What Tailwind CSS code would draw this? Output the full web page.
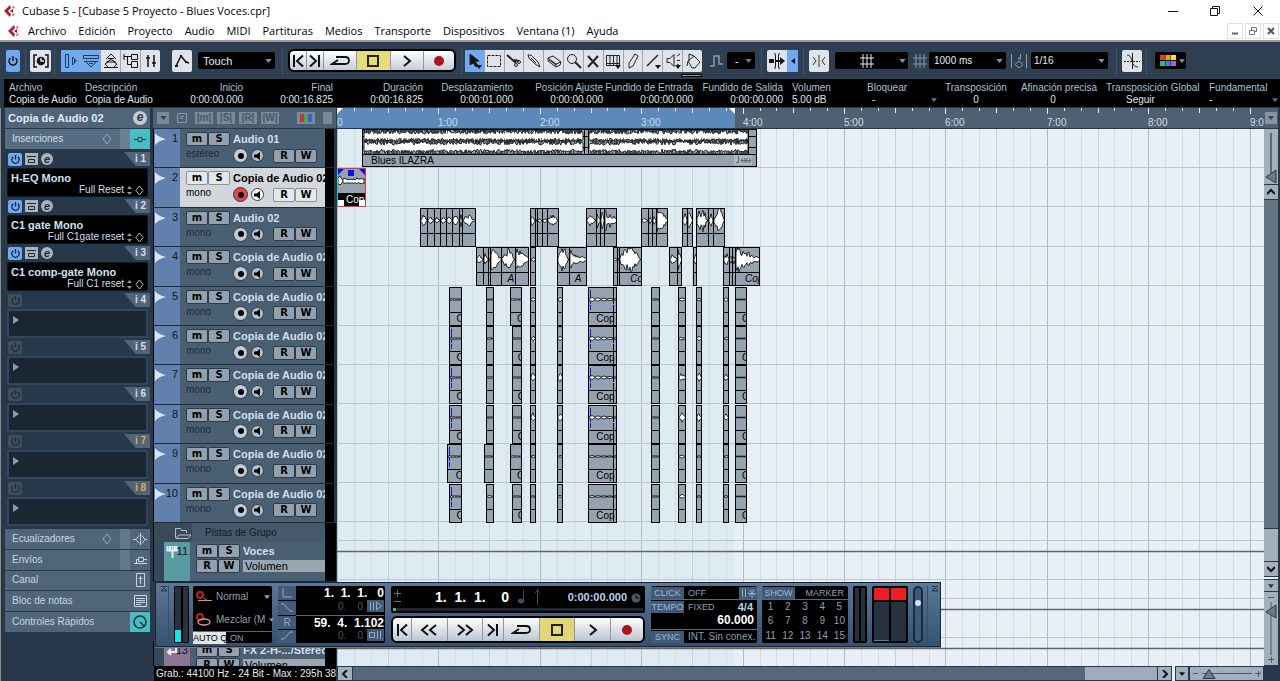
<!DOCTYPE html>
<html lang="es">
<head>
  <meta charset="UTF-8" />
  <meta name="viewport" content="width=device-width, initial-scale=1.0" />
  <title>Cubase 5 - [Cubase 5 Proyecto - Blues Voces.cpr]</title>
  <script src="https://cdn.jsdelivr.net/npm/@tailwindcss/browser@4"></script>
</head>
<body class="h-screen flex flex-col overflow-hidden bg-[#26384a] font-['Liberation_Sans',sans-serif] text-[10px] leading-3 text-[#d3dfec] whitespace-nowrap">

  <!-- shared icons -->
  <svg class="hidden">
    <symbol id="logo" viewBox="0 0 12 12"><path d="M6 0 0 6l6 6 1-3-3-3 3-3z" fill="#b01c36"/><path d="M8 1l3 1-2 2zM8 11l3-1-2-2z" fill="#c9566a"/><path d="M6 6l3-2v4z" fill="#8e1029"/></symbol>
    <symbol id="power" viewBox="0 0 12 12"><path d="M6 1v5M3.500 3a4 4 0 1 0 5 0" fill="none" stroke="currentColor" stroke-width="1.400"/></symbol>
    <symbol id="start" viewBox="0 0 12 14"><path d="M2 1v12M11 1.500 5 7l6 5.500" fill="none" stroke="#111" stroke-width="2"/></symbol>
    <symbol id="end" viewBox="0 0 12 14"><path d="M10 1v12M1 1.500 7 7l-6 5.500" fill="none" stroke="#111" stroke-width="2"/></symbol>
    <symbol id="cycle" viewBox="0 0 20 12"><path d="M6 2h9q4 0 4 3.500T15 9H2l6-4" fill="none" stroke="#111" stroke-width="1.800"/></symbol>
    <symbol id="stop" viewBox="0 0 14 14"><path d="M2 2h10v10H2z" fill="none" stroke="#222" stroke-width="2"/></symbol>
    <symbol id="play" viewBox="0 0 10 14"><path d="M2 2l6 5-6 5" fill="none" stroke="#111" stroke-width="2"/></symbol>
    <symbol id="rec" viewBox="0 0 12 12"><circle cx="6" cy="6" r="5" fill="#ab151d"/></symbol>
    <symbol id="rew" viewBox="0 0 18 14"><path d="M8 2 2 7l6 5M16 2l-6 5 6 5" fill="none" stroke="#111" stroke-width="2"/></symbol>
    <symbol id="fwd" viewBox="0 0 18 14"><path d="M2 2l6 5-6 5M10 2l6 5-6 5" fill="none" stroke="#111" stroke-width="2"/></symbol>
    <symbol id="down" viewBox="0 0 8 5"><path d="M0 0h8L4 5z" fill="currentColor"/></symbol>
    <symbol id="diamond" viewBox="0 0 10 12"><path d="M5 1l4 5-4 5-4-5z" fill="none" stroke="currentColor"/></symbol>
    <symbol id="grid" viewBox="0 0 14 14"><path d="M3 0v14M7 0v14M11 0v14M0 4h14M0 10h14" stroke="currentColor" fill="none"/></symbol>
  </svg>

  <header class="bg-white text-black font-['Open_Sans',sans-serif] text-[11px] leading-4 border-b-2 border-[#9b9a9c] shrink-0">
    <div class="flex items-center h-[21px] pl-1">
      <svg class="w-3 h-3"><use href="#logo"/></svg>
      <h1 class="ml-[6px] flex-1">Cubase 5 - [Cubase 5 Proyecto - Blues Voces.cpr]</h1>
      <button aria-label="Minimizar" class="w-[42px] grid place-items-center"><svg class="w-[10px] h-[10px]"><path d="M0 5.500h10" stroke="#111"/></svg></button>
      <button aria-label="Restaurar" class="w-[42px] grid place-items-center"><svg class="w-[10px] h-[10px]" fill="none" stroke="#111"><path d="M.5 2.500h7v7h-7zM2.500 2.500v-2h7v7h-2"/></svg></button>
      <button aria-label="Cerrar" class="w-[44px] grid place-items-center"><svg class="w-[10px] h-[10px]"><path d="M.5.5l9 9M9.500.5l-9 9" stroke="#111"/></svg></button>
    </div>
    <div class="flex items-center h-[19px] pl-2 pr-px">
      <svg class="w-3 h-3 mr-2"><use href="#logo"/></svg>
      <nav class="flex flex-1 gap-3">
        <a href="#">Archivo</a><a href="#">Edición</a><a href="#">Proyecto</a><a href="#">Audio</a><a href="#">MIDI</a><a href="#">Partituras</a><a href="#">Medios</a><a href="#">Transporte</a><a href="#">Dispositivos</a><a href="#">Ventana (1)</a><a href="#">Ayuda</a>
      </nav>
      <div class="flex gap-[2px]">
        <button aria-label="Minimizar proyecto" class="w-4 h-4 border border-[#e2e2e2] grid place-items-center"><svg class="w-2 h-2"><path d="M1 6.500h6" stroke="#666" stroke-width="2"/></svg></button>
        <button aria-label="Restaurar proyecto" class="w-4 h-4 border border-[#e2e2e2] grid place-items-center"><svg class="w-2 h-2" fill="none" stroke="#777"><path d="M.5 3.500h5v4h-5zM2.500 3V.5h5v4H6"/></svg></button>
        <button aria-label="Cerrar proyecto" class="w-4 h-4 border border-[#e2e2e2] grid place-items-center"><svg class="w-2 h-2"><path d="M1 1l6 6M7 1L1 7" stroke="#555" stroke-width="2"/></svg></button>
      </div>
    </div>
  </header>

  <!-- toolbar -->
  <div class="flex items-center h-[37px] shrink-0 bg-[#2d3f50] pl-[6px] text-[#111]">
    <button aria-label="Activar proyecto" class="w-[14px] h-[22px] bg-[#70a9ef] rounded-xs grid place-items-center"><svg class="w-3 h-4"><use href="#power"/></svg></button>
    <i class="w-px h-7 ml-[5px] bg-[#3f5264]"></i>
    <button aria-label="Compensar retardo" class="ml-1 w-[21px] h-[22px] bg-[#dfe4ea] rounded-xs grid place-items-center"><svg class="w-4 h-4" fill="none" stroke="#111" stroke-width="1.500"><path d="M4 2H1v12h3M12 2h3v12h-3"/><circle cx="8" cy="8" r="3.500" fill="#111"/><path d="M8 5v3h3" stroke="#dfe4ea"/></svg></button>
    <i class="w-px h-7 ml-[3px] bg-[#3f5264]"></i>
    <div class="ml-[6px] flex h-[22px] rounded-xs overflow-hidden divide-x divide-[#9aa6b3] bg-[#dfe4ea]">
      <button aria-label="Inspector" class="w-5 bg-[#70a9ef] grid place-items-center"><svg class="w-4 h-4" fill="none" stroke="#1b3a66"><path d="M2.500 1.500h3v13h-3zM9.500 4v8l4-4zM11.500 6v4"/></svg></button>
      <button aria-label="Línea de información" class="w-5 bg-[#70a9ef] grid place-items-center"><svg class="w-4 h-4" fill="none" stroke="#1b3a66"><path d="M.5 2.500h15v3H.5zM1 8.500h14M3 9l5 5 5-5M6 10.500h4"/></svg></button>
      <button aria-label="Vista general" class="w-5 grid place-items-center"><svg class="w-4 h-4" fill="none" stroke="#111"><path d="M3 6l5-5 5 5M5 5.500h6M3 9.500l5-3 5 3M1 14.500h14M5 14l-3-3 3-2h6l3 2-3 3"/></svg></button>
      <button aria-label="Pool" class="w-5 grid place-items-center"><svg class="w-4 h-4" fill="none" stroke="#111"><path d="M1 1v6M1 3.500h7M4.500 3v8.500H8M8.500 1.500h6v5h-6zM8.500 8.500h6v6h-6z"/></svg></button>
      <button aria-label="Mezclador" class="w-[19px] grid place-items-center"><svg class="w-3 h-4" fill="none" stroke="#111" stroke-width="1.500"><path d="M3 2v12M9 2v12M1 5h4M7 10h4"/></svg></button>
    </div>
    <button aria-label="Panel de automatización" class="ml-3 w-5 h-[22px] bg-[#dfe4ea] rounded-xs grid place-items-center"><svg class="w-4 h-4" fill="none" stroke="#111" stroke-width="1.500"><path d="M2 13L7 3l5 6 3 1"/><path d="M1 12h3v2H1zM6 2h2v2H6zM11 8h2v2h-2z" fill="#111" stroke="none"/></svg></button>
    <label class="relative ml-[6px]"><select aria-label="Modo de automatización" class="appearance-none w-[77px] h-[17px] pl-[5px] bg-black rounded-xs text-[11px] text-[#e5eaf0]"><option>Touch</option></select><svg class="absolute right-[3px] top-[7px] w-[7px] h-1 text-[#7f93a5]"><use href="#down"/></svg></label>
    <i class="w-px h-7 ml-[7px] bg-[#3f5264]"></i>
    <div class="ml-[5px] flex h-[23px] w-[168px] border-2 border-black rounded-md overflow-hidden divide-x divide-[#8c97a3] bg-linear-to-b from-white to-[#c5ced8]">
      <button aria-label="Inicio" class="w-[17px] grid place-items-center"><svg class="w-3 h-[14px]"><use href="#start"/></svg></button>
      <button aria-label="Fin" class="w-[17px] grid place-items-center"><svg class="w-3 h-[14px]"><use href="#end"/></svg></button>
      <button aria-label="Ciclo" class="flex-1 grid place-items-center"><svg class="w-5 h-3"><use href="#cycle"/></svg></button>
      <button aria-label="Parar" class="flex-1 grid place-items-center bg-[#e5dc7a]"><svg class="w-[14px] h-[14px]"><use href="#stop"/></svg></button>
      <button aria-label="Reproducir" class="flex-1 grid place-items-center"><svg class="w-[10px] h-[14px]"><use href="#play"/></svg></button>
      <button aria-label="Grabar" class="w-[30px] grid place-items-center"><svg class="w-3 h-3"><use href="#rec"/></svg></button>
    </div>
    <i class="w-px h-7 ml-[5px] bg-[#3f5264]"></i>
    <div class="relative ml-[3px]">
      <div id="tools" class="flex h-[22px] w-[237px] rounded-xs overflow-hidden divide-x divide-[#9aa6b3] bg-[#dfe4ea]"></div>
      <i class="absolute right-0 top-6 w-[21px] h-[3px] bg-[#8e9aa7] border border-black"></i>
    </div>
    <svg class="ml-2 w-[14px] h-[14px]" fill="none" stroke="#8c9cab" stroke-width="1.500"><path d="M0 12h4V2h5v8h4"/></svg>
    <label class="relative ml-[3px]"><select aria-label="Tipo de color" class="appearance-none w-7 h-[17px] pl-2 bg-black rounded-xs text-[11px] text-[#e5eaf0]"><option>-</option></select><svg class="absolute right-[3px] top-[7px] w-[7px] h-1 text-[#5d8080]"><use href="#down"/></svg></label>
    <i class="w-px h-7 ml-[6px] bg-[#3f5264]"></i>
    <div class="ml-[5px] flex h-[22px] rounded-xs overflow-hidden bg-[#dfe4ea]">
      <button aria-label="Auto-desplazamiento" class="w-5 grid place-items-center"><svg class="w-4 h-4" fill="#111"><path d="M0 6h5v4H0zM6 2h1v12H6zM9 2h1v12H9zM7 7h4V4l5 4-5 4V9H7z"/><path d="M5 1h2M9 1h2M5 15h2M9 15h2" stroke="#111"/></svg></button>
      <button aria-label="Suspender desplazamiento" class="w-[11px] bg-[#70a9ef] grid place-items-center"><svg class="w-1 h-[6px]"><path d="M4 0v6L0 3z" fill="#111"/></svg></button>
    </div>
    <i class="w-px h-7 ml-[5px] bg-[#3f5264]"></i>
    <button aria-label="Ajuste" class="ml-[5px] w-5 h-[22px] bg-[#dfe4ea] rounded-xs grid place-items-center"><svg class="w-[14px] h-[14px]" fill="none" stroke="#333"><path d="M7 1v12M1 3l3 4-3 4M13 3l-3 4 3 4"/></svg></button>
    <label class="relative ml-[6px]"><select aria-label="Tipo de ajuste" class="appearance-none w-[73px] h-[17px] bg-black rounded-xs text-[11px]"><option></option></select><svg class="absolute left-[25px] top-[2px] w-[14px] h-[14px] text-[#e5eaf0]"><use href="#grid"/></svg><svg class="absolute right-[2px] top-[7px] w-[7px] h-1 text-[#7f93a5]"><use href="#down"/></svg></label>
    <svg class="ml-[5px] w-[14px] h-[14px] text-[#8c9cab]"><use href="#grid"/></svg>
    <label class="relative ml-[2px]"><select aria-label="Tipo de rejilla" class="appearance-none w-[77px] h-[17px] pl-[5px] bg-black rounded-xs text-[10px] text-[#e5eaf0]"><option>1000 ms</option></select><svg class="absolute right-[3px] top-[7px] w-[7px] h-1 text-[#7f93a5]"><use href="#down"/></svg></label>
    <svg class="ml-[5px] w-4 h-4" fill="none" stroke="#8c9cab"><path d="M.5 1v14M15.500 1v14M9.500 1v5h-2v-1h2M8 8l4 3.500L8 15l-4-3.500z"/></svg>
    <label class="relative ml-1"><select aria-label="Cuantización" class="appearance-none w-[77px] h-[17px] pl-[3px] bg-black rounded-xs text-[10px] text-[#e5eaf0]"><option>1/16</option></select><svg class="absolute right-[3px] top-[7px] w-[7px] h-1 text-[#7f93a5]"><use href="#down"/></svg></label>
    <i class="w-px h-7 ml-2 bg-[#3f5264]"></i>
    <button aria-label="Cruces por cero" class="ml-[5px] w-5 h-[22px] bg-[#dfe4ea] rounded-xs grid place-items-center"><svg class="w-4 h-4" fill="none" stroke="#222"><path d="M8.500 0v16M3 2q4 0 5 6t6 6"/><path d="M0 8.500h16" stroke-dasharray="2 1"/></svg></button>
    <i class="w-px h-7 ml-[4px] bg-[#3f5264]"></i>
    <button aria-label="Colores" class="ml-[8px] w-[31px] h-[17px] bg-black rounded-xs flex items-center pl-[5px] gap-[3px]"><svg class="w-4 h-[11px]"><path d="M0 0h5v5H0z" fill="#e8362c"/><path d="M5.500 0h5v5h-5z" fill="#f0a022"/><path d="M11 0h5v5h-5z" fill="#f2e233"/><path d="M0 6h5v5H0z" fill="#2cc06a"/><path d="M5.500 6h5v5h-5z" fill="#2b8fea"/><path d="M11 6h5v5h-5z" fill="#b45be0"/></svg><svg class="w-[6px] h-1 text-[#7f93a5]"><use href="#down"/></svg></button>
  </div>

  <!-- info line -->
  <dl class="flex shrink-0 h-[28px] ml-1 pl-[5px] pt-[3px] bg-black text-[#a9c0d8]">
    <div class="w-[76px]"><dt>Archivo</dt><dd class="text-[#dde6ee]">Copia de Audio</dd></div>
    <div class="w-[68px]"><dt>Descripción</dt><dd class="text-[#dde6ee]">Copia de Audio</dd></div>
    <div class="w-[90px] text-right"><dt>Inicio</dt><dd class="text-[#dde6ee]">0:00:00.000</dd></div>
    <div class="w-[90px] text-right"><dt>Final</dt><dd class="text-[#dde6ee]">0:00:16.825</dd></div>
    <div class="w-[90px] text-right"><dt>Duración</dt><dd class="text-[#dde6ee]">0:00:16.825</dd></div>
    <div class="w-[90px] text-right"><dt>Desplazamiento</dt><dd class="text-[#dde6ee]">0:00:01.000</dd></div>
    <div class="w-[90px] text-right"><dt>Posición Ajuste</dt><dd class="text-[#dde6ee]">0:00:00.000</dd></div>
    <div class="w-[90px] text-right"><dt>Fundido de Entrada</dt><dd class="text-[#dde6ee]">0:00:00.000</dd></div>
    <div class="w-[90px] text-right"><dt>Fundido de Salida</dt><dd class="text-[#dde6ee]">0:00:00.000</dd></div>
    <div class="ml-[9px] w-[75px]"><dt>Volumen</dt><dd class="text-[#dde6ee]">5.00 dB</dd></div>
    <div class="relative w-[76px]"><dt>Bloquear</dt><dd class="pl-[5px] text-[#dde6ee]">-</dd><svg class="absolute right-[6px] top-4 w-[6px] h-1 text-[#5d7080]"><use href="#down"/></svg></div>
    <div class="w-[66px] text-center"><dt>Transposición</dt><dd class="text-[#dde6ee]">0</dd></div>
    <div class="ml-[10px] w-[80px] text-center"><dt>Afinación precisa</dt><dd class="pr-[12px] text-[#dde6ee]">0</dd></div>
    <div class="ml-[7px] w-[95px]"><dt>Transposición Global</dt><dd class="pl-5 text-[#dde6ee]">Seguir</dd></div>
    <div class="relative ml-[8px] flex-1"><dt>Fundamental</dt><dd class="text-[#dde6ee]">-</dd><svg class="absolute right-[2px] top-4 w-[6px] h-1 text-[#5d7080]"><use href="#down"/></svg></div>
  </dl>

  <main class="relative flex flex-1 min-h-0 pt-px">
    <!-- inspector -->
    <aside class="w-[153px] shrink-0 pl-1 pr-[3px] bg-[#26384a] border-l border-[#8f8a86]">
      <div class="flex items-center justify-between h-[20px] pl-[3px] pr-[3px] bg-[#50657a] font-bold text-[11px] text-[#e2ecf6]">Copia de Audio 02
        <span class="w-[14px] h-[14px] rounded-full bg-[#c3ccd6] text-[#26384a] italic text-center text-[12px] leading-[13px]">e</span></div>
      <div class="flex items-center h-[20px] mt-px pl-[7px] bg-[#566c83]"><span class="flex-1">Inserciones</span>
        <svg class="w-[10px] h-3 mr-2 text-[#93a5b8]"><use href="#diamond"/></svg><i class="w-[10px] h-full bg-[#6b7f94]"></i>
        <button aria-label="Inserciones" class="w-5 h-full bg-[#49bcc4] grid place-items-center"><svg class="w-3 h-2" fill="none" stroke="#17404c"><path d="M0 4.500h4M8 4.500h4M4 2.500h4v4H4z"/></svg></button></div>
      <div id="inserts" class="pt-px pl-[2px]"></div>
      <div class="flex flex-col h-[103px] mt-[3px] gap-px text-[#c6d4e2]">
        <div class="flex-1 flex items-center pl-[7px] bg-[#50657a]"><span class="flex-1">Ecualizadores</span><svg class="w-[10px] h-3 mr-2 text-[#93a5b8]"><use href="#diamond"/></svg><i class="w-[10px] h-full bg-[#64788d]"></i><svg class="w-5 h-3" fill="none" stroke="currentColor"><path d="M10.500 0v12M3 6.500h3l3-4M6 6.500l3 4M12 2.500l3 4-3 4M15 6.500h2"/></svg></div>
        <div class="flex-1 flex items-center pl-[7px] bg-[#50657a]"><span class="flex-1">Envíos</span><i class="w-[10px] h-full bg-[#64788d]"></i><svg class="w-5 h-3" fill="none" stroke="currentColor"><path d="M4 9.500h13M6.500 9V5.500h2M8.500 3.500h5v4h-5zM13.500 5.500H17"/></svg></div>
        <div class="flex-1 flex items-center pl-[7px] bg-[#50657a]"><span class="flex-1">Canal</span><svg class="w-5 h-[14px]" fill="none" stroke="currentColor"><path d="M6.500.5h8v13h-8zM10.500 3v8M8.500 5.500h4"/></svg></div>
        <div class="flex-1 flex items-center pl-[7px] bg-[#50657a]"><span class="flex-1">Bloc de notas</span><svg class="w-5 h-3" fill="none" stroke="currentColor"><path d="M4.500.5h12v11h-12zM6 3.500h9M6 5.500h9M6 7.500h9M6 9.500h5"/></svg></div>
        <div class="flex-1 flex items-center pl-[7px] bg-[#50657a]"><span class="flex-1">Controles Rápidos</span><span class="w-5 h-full bg-[#49bcc4] grid place-items-center"><svg class="w-4 h-4" fill="none" stroke="#17303c" stroke-width="1.500"><circle cx="8" cy="8" r="6"/><path d="M8 8l4 4"/></svg></span></div>
      </div>
    </aside>

    <!-- track list -->
    <section class="w-[183px] shrink-0 flex flex-col bg-[#26384a]">
      <div class="flex items-center h-5 pl-1 pr-1 gap-1 bg-[#4c6074] text-[#44586b] font-bold">
        <span class="w-3 h-3 bg-[#7c8997] grid place-items-center text-[#33475a]"><svg class="w-[7px] h-1"><use href="#down"/></svg></span>
        <svg class="w-[10px] h-[10px] ml-1 mr-1" fill="none" stroke="#8b98a5"><path d="M.5.5h9v9h-9zM3 3.500h4M3 5.500h3"/></svg>
        <span class="w-[18px] text-center bg-[#7c8997]">|m|</span><span class="w-[18px] text-center bg-[#7c8997]">|S|</span><span class="w-[18px] text-center bg-[#7c8997]">|R|</span><span class="w-[18px] text-center bg-[#7c8997]">|W|</span>
        <span class="ml-auto w-[18px] h-3 bg-[#7c8997] px-[3px] py-[2px] flex"><i class="flex-1 bg-[#a73f3f]"></i><i class="flex-1 bg-[#3fa857]"></i><i class="flex-1 bg-[#3f5fd0]"></i></span>
        <span class="ml-1 w-[9px] h-3 bg-[#7c8997]"></span>
      </div>
      <div id="tracks" class="flex flex-col h-[394px] shrink-0 mt-px"></div>
      <div class="flex h-[19px] shrink-0 pr-[11px] bg-black"><div class="flex flex-1 items-center ml-px bg-[#46596b] text-[#111c27]">
        <span class="w-[38px] h-full bg-[#3b4a58] pl-[18px] grid place-items-center"><svg class="w-[17px] h-3" fill="none" stroke="#b5bfc9"><path d="M1.500 11V1.500h5l1 2h5V6M2 11.500L5 8h12l-3 3.500z"/></svg></span><span class="pl-[13px]">Pistas de Grupo</span></div></div>
      <div id="groups" class="flex flex-col flex-1 min-h-0 overflow-hidden"></div>
      <div class="h-[15px] shrink-0 pl-[2px] ml-px bg-black text-[#e5eaf0] overflow-hidden leading-[15px]">Grab.: 44100 Hz - 24 Bit - Max : 295h 38</div>
    </section>

    <!-- arrangement -->
    <section class="flex flex-col flex-1 min-w-0 pl-px">
      <div id="ruler" class="relative h-5 shrink-0 overflow-hidden bg-[#4e6072] text-[#cfdce9]"></div>
      <div id="canvas" class="relative flex-1 mt-px overflow-hidden bg-[#e9eff6] text-black"></div>
      <div class="flex h-[15px] shrink-0 bg-[#26384a] text-[#111]">
        <button aria-label="Izquierda" class="w-4 border border-[#26384a] bg-[#a3afbb] grid place-items-center"><svg class="w-2 h-2"><path d="M6 0L2 4l4 4" fill="none" stroke="#111" stroke-width="2"/></svg></button>
        <div class="flex-1 flex border-y border-[#26384a] bg-[#9fadb9]"><i class="w-[91%] bg-[#55687a]"></i></div>
        <button aria-label="Derecha" class="w-[15px] border border-[#26384a] bg-[#a3afbb] grid place-items-center"><svg class="w-2 h-2"><path d="M2 0l4 4-4 4" fill="none" stroke="#111" stroke-width="2"/></svg></button>
        <i class="w-[3px] bg-[#e9eff6]"></i>
        <button aria-label="Zoom predefinido" class="w-[14px] border border-[#26384a] bg-[#a3afbb] grid place-items-center"><svg class="w-[6px] h-1"><use href="#down"/></svg></button>
        <div class="w-[75px] flex items-center border border-[#26384a] bg-[#a3afbb]"><svg class="w-[73px] h-[13px]" fill="none" stroke="#4a5a69"><path d="M3 6.500h5M12 6.500h50M65 6.500h6M68.500 4v6"/><path d="M13 11.500l6-9 6 9z" fill="#6b7b8a" stroke="#26384a"/></svg></div>
      </div>
    </section>

    <!-- vertical scrolling and zoom -->
    <div class="w-4 shrink-0 flex flex-col bg-[#26384a] pr-[2px] gap-px">
      <button aria-label="Divisor" class="h-5 bg-[#4e6072] grid place-items-center"><span class="w-3 h-3 bg-[#8694a2] grid place-items-center text-[#33475a]"><svg class="w-2 h-1"><use href="#down"/></svg></span></button>
      <svg class="w-[14px] h-[55px] bg-[#a3afbb]"><path d="M7 4v40" stroke="#5b6a78" stroke-width="2"/><path d="M2 48l10-7v13z" fill="#6b7b8a" stroke="#26384a"/></svg>
      <button aria-label="Arriba" class="h-[14px] bg-[#a3afbb] grid place-items-center"><svg class="w-2 h-2"><path d="M0 6l4-4 4 4" fill="none" stroke="#111" stroke-width="2"/></svg></button>
      <i class="flex-1 bg-[#637483]"></i>
      <i class="h-8 bg-[#a3afbb]"></i>
      <button aria-label="Abajo" class="h-[14px] bg-[#a3afbb] grid place-items-center"><svg class="w-2 h-2"><path d="M0 2l4 4 4-4" fill="none" stroke="#111" stroke-width="2"/></svg></button>
      <i class="h-[2px] bg-[#e9eff6]"></i>
      <button aria-label="Zoom vertical" class="h-[11px] bg-[#a3afbb] grid place-items-center text-[#26384a]"><svg class="w-[6px] h-1"><use href="#down"/></svg></button>
      <svg class="w-[14px] h-[73px] bg-[#a3afbb] mb-4" fill="none" stroke="#4a5a69"><path d="M4 5.500h6M7 10v53M4 67.500h6M7.500 65v6"/><path d="M2 20l10-7v13z" fill="#6b7b8a" stroke="#26384a"/></svg>
    </div>

    <!-- floating transport panel -->
    <section class="absolute left-[155px] bottom-[34px] h-[65px] flex py-[3px] pl-[5px] pr-px border border-[#1a2735] shadow-[0_1px_0_#777] bg-linear-to-b from-[#5b7996] to-[#34516f] text-[#8e9fb0]">
      <div class="w-[8px] mr-[5px] border-r border-[#34506d]"><svg class="w-[6px] h-[6px]" fill="none" stroke="#1f3346"><path d="M0 .5h6M0 5l3-3 3 3z"/></svg></div>
      <div class="w-[15px] flex gap-[2px] p-px bg-black rounded-xs"><div class="flex-1 flex items-end bg-[#26333f]"><i class="w-full h-3 bg-[#18e4ee]"></i></div><div class="flex-1 bg-[#26333f]"></div></div>
      <div class="ml-[4px] w-[79px] flex flex-col bg-black rounded-xs">
        <div class="flex-1 flex items-center gap-[4px] pl-[3px]"><svg class="w-4 h-3" fill="none"><circle cx="4" cy="4" r="3" stroke="#b32626" stroke-width="2"/><path d="M2 9.500h14M8 7l3 2.500" stroke="#d68a84"/></svg><span class="flex-1">Normal</span><svg class="w-[6px] h-1 mr-[2px]"><use href="#down"/></svg></div>
        <div class="flex-1 flex items-center gap-[4px] pl-[3px]"><svg class="w-4 h-[14px] shrink-0" fill="none"><circle cx="4" cy="4" r="3" stroke="#b32626" stroke-width="2"/><ellipse cx="8" cy="9" rx="6" ry="3" stroke="#e0908c" stroke-width="1.500"/></svg><span class="flex-1">Mezclar (M</span><svg class="w-[5px] h-1 shrink-0"><use href="#down"/></svg></div>
        <div class="h-3 flex items-center text-[9px] border-t border-[#5c6975]"><span class="w-[33px] text-center bg-[#e2e6ea] text-black">AUTO Q</span><span class="pl-1">ON</span></div>
      </div>
      <div class="ml-[6px] w-[107px] grid grid-cols-[18px_1fr] grid-rows-4 pr-px bg-black rounded-xs text-right leading-[14px]">
        <span class="bg-[#405a78] grid place-items-center"><svg class="w-3 h-3"><path d="M2 1v9h9" fill="none" stroke="#93aac2"/></svg></span><b class="text-white text-[12px]">1.&nbsp; 1.&nbsp; 1.&nbsp;&nbsp; 0</b>
        <span class="bg-[#405a78] border-t border-black grid place-items-center"><svg class="w-3 h-3"><path d="M0 2h3l6 7h3" fill="none" stroke="#93aac2"/></svg></span><span class="flex justify-end gap-1 text-[#4b5965]">0.&nbsp;&nbsp;&nbsp; 0 <svg class="w-[17px] h-3 bg-[#405a78]" fill="none" stroke="#93aac2"><path d="M3.500 2v8M6.500 2v8M9.500 2v8l5-4z"/></svg></span>
        <span class="bg-[#405a78] border-t border-black text-center text-[#93aac2]">R</span><b class="text-white text-[12px] border-t border-[#5c6975]">59.&nbsp; 4.&nbsp; 1.102</b>
        <span class="bg-[#405a78] border-t border-black grid place-items-center"><svg class="w-3 h-3"><path d="M0 9h3l6-7h3" fill="none" stroke="#93aac2"/></svg></span><span class="flex justify-end gap-1 text-[#4b5965]">0.&nbsp;&nbsp;&nbsp; 0 <svg class="w-[17px] h-3 bg-[#405a78]" fill="none" stroke="#93aac2"><path d="M2.500 3.500h5v5h-5zM10.500 2v8M13.500 2v8"/></svg></span>
      </div>
      <div class="ml-[6px] w-[254px] flex flex-col gap-[3px]">
        <div class="relative h-[27px] bg-black rounded-xs flex items-start pt-[3px] pr-1 pl-[2px] text-white">
          <svg class="w-2 h-4" stroke="#4f7a70"><path d="M1 4.500h7M4.500 1v7M1 12.500h7"/></svg>
          <b class="ml-[34px] text-[14px] leading-4">1.&nbsp; 1.&nbsp; 1.&nbsp;&nbsp;&nbsp; 0</b>
          <svg class="w-6 h-4 ml-2" fill="none" stroke="#3e4f5c"><path d="M6.500 1v11M20.500 0v16M18 4l2.500-3L23 4"/><ellipse cx="4" cy="12" rx="3" ry="2" fill="#3e4f5c"/></svg>
          <b class="ml-auto text-[11px] leading-4 text-[#b7d3ee]">0:00:00.000</b>
          <svg class="ml-1 mt-1 w-[10px] h-[10px]"><circle cx="5" cy="5" r="4.500" fill="#4b5b68"/><path d="M5 2v3h3" fill="none" stroke="#000"/></svg>
          <i class="absolute inset-x-[2px] bottom-[2px] h-[3px] bg-[#1c2733] border-l-3 border-[#2fbf71]"></i>
        </div>
        <div class="flex-1 flex border-2 border-black rounded-md overflow-hidden divide-x divide-[#8c97a3] bg-linear-to-b from-white to-[#bcc6d1]">
          <button aria-label="Ir al inicio" class="w-[19px] grid place-items-center"><svg class="w-3 h-[14px]"><use href="#start"/></svg></button>
          <button aria-label="Rebobinar" class="flex-1 grid place-items-center"><svg class="w-[18px] h-[14px]"><use href="#rew"/></svg></button>
          <button aria-label="Avanzar" class="flex-1 grid place-items-center"><svg class="w-[18px] h-[14px]"><use href="#fwd"/></svg></button>
          <button aria-label="Ir al final" class="w-[21px] grid place-items-center"><svg class="w-3 h-[14px]"><use href="#end"/></svg></button>
          <button aria-label="Ciclo" class="flex-1 grid place-items-center"><svg class="w-5 h-3"><use href="#cycle"/></svg></button>
          <button aria-label="Parar" class="flex-1 grid place-items-center bg-[#e0d676]"><svg class="w-[14px] h-[14px]"><use href="#stop"/></svg></button>
          <button aria-label="Reproducir" class="flex-1 grid place-items-center"><svg class="w-[10px] h-[14px]"><use href="#play"/></svg></button>
          <button aria-label="Grabar" class="w-[32px] grid place-items-center"><svg class="w-3 h-3"><use href="#rec"/></svg></button>
        </div>
      </div>
      <div class="ml-[6px] w-[106px] flex flex-col bg-black rounded-xs text-[9px] leading-[12px]">
        <div class="flex gap-1 h-[14px] items-center border-b border-[#5c6975]"><button class="w-[33px] bg-[#405a78] text-[#9fb8d2]">CLICK</button><span class="flex-1">OFF</span><svg class="w-[18px] h-3 bg-[#405a78]" stroke="#93aac2"><path d="M3.500 2v8M6.500 2v8M9 6.500h8M13 2v9M10 3l6 6M16 3l-6 6"/></svg></div>
        <div class="flex gap-1 h-[14px] items-center"><button class="w-[33px] bg-[#405a78] text-[#9fb8d2]">TEMPO</button><span class="flex-1">FIXED</span><b class="pr-1 text-[11px] text-[#b7d3ee]">4/4</b></div>
        <b class="text-right pr-[3px] text-[12px] text-white">60.000</b>
        <div class="mt-auto flex gap-1 h-[14px] items-center border-t border-[#5c6975]"><button class="w-[33px] bg-[#405a78] text-[#9fb8d2]">SYNC</button><span class="flex-1 text-[10px]">INT. Sin conex.</span></div>
      </div>
      <div class="ml-[5px] w-[86px] flex flex-col bg-black rounded-xs text-[10px] leading-[12px]">
        <div class="flex h-[14px] items-center justify-between pr-1 border-b border-[#5c6975] text-[9px]"><button class="w-[33px] bg-[#405a78] text-[#9fb8d2]">SHOW</button><span>MARKER</span></div>
        <div id="markers" class="flex-1 grid grid-cols-5 items-center text-center"></div>
      </div>
      <div class="ml-[5px] w-[14px] flex gap-[2px] p-[2px] bg-black rounded-xs"><i class="flex-1 bg-[#26333f]"></i><i class="flex-1 bg-[#26333f]"></i></div>
      <div class="ml-[5px] w-[36px] grid grid-cols-2 grid-rows-[12px_1fr] gap-[2px] p-[2px] bg-black rounded-xs"><i class="bg-[#ee1c24]"></i><i class="bg-[#ee1c24]"></i><i class="bg-[#26333f] border-b border-[#2d9a9f]"></i><i class="bg-[#26333f]"></i></div>
      <div class="ml-[5px] w-[10px] pt-3 flex justify-center border-2 border-[#1b2b3c] rounded-full bg-[#3d5a78]"><i class="w-[6px] h-[6px] shrink-0 rounded-full bg-[#cfe6ff]"></i></div>
      <div class="ml-[4px] w-[12px] pl-1 border-l border-[#34506d]"><svg class="w-[6px] h-[6px]" fill="none" stroke="#1f3346"><path d="M0 .5h6M0 5l3-3 3 3z"/></svg></div>
    </section>
  </main>

  <script>
    const toolIcons = [
      ["Seleccionar", '<path d="M4 1l9 7-4 .5 3 4-2 1.500-3-4-3 2z" fill="#111"/>'],
      ["Rango", '<path d="M1.500 2.500h13v11h-13z" stroke-dasharray="3 1"/>'],
      ["Dividir", '<path d="M1 2l9 8M8 7l5 1" stroke-width="2"/><circle cx="13" cy="9" r="1.500"/><circle cx="10" cy="12" r="1.500"/>'],
      ["Pegar", '<path d="M2 2l3 0 7 7 2 5-5-3-6-6zM5 5l5 5"/>'],
      ["Borrar", '<path d="M2 5l5-2 8 6-1 3-4 2-8-6zM2 5l8 6 5-2M10 11v3M3 7l7 5"/>'],
      ["Zoom", '<circle cx="6" cy="6" r="4.500"/><path d="M9 9l6 6" stroke-width="2"/>'],
      ["Enmudecer", '<path d="M3 3l10 11M13 3L3 14" stroke-width="2"/>'],
      ["Time Warp", '<path d="M1.500 2.500h13v10h-13zM5 2v10M8.500 2v10M12 2v10M1 10.500h14"/>'],
      ["Dibujar", '<path d="M10 1l3 2-5 10-4 2V10z"/>'],
      ["Línea", '<path d="M2 13L13 2" stroke-width="1.500"/>'],
      ["Reproducir", '<path d="M2 5.500h3l4-4v12l-4-4H2zM12 3l3-2M12 7.500h3M12 11l3 2"/>'],
      ["Color", '<path d="M3 8l6-5 6 6-5 6H7zM9 3L4 1v7M3 8l-1 5"/>'],
    ];
    const corner = '<path d="M10 12h6l-3 4z" fill="#111" stroke="none"/>';
    document.getElementById("tools").innerHTML = toolIcons.map(([name, icon], i) => `
      <button aria-label="${name}" class="flex-1 grid place-items-center ${i === 0 ? "bg-[#70a9ef]" : ""}">
        <svg class="w-4 h-4" fill="none" stroke="#222">${icon}${[0, 7, 9, 10].includes(i) ? corner : ""}</svg>
      </button>`).join("");

    // insert slots
    const inserts = [["H-EQ Mono", "Full Reset"], ["C1 gate Mono", "Full C1gate reset"], ["C1 comp-gate Mono", "Full C1 reset"], null, null, null, null, null];
    document.getElementById("inserts").innerHTML = inserts.map((slot, i) => `
      <div class="h-[47px]">
        <div class="flex items-center h-[18px] gap-[2px] pl-px">
          <button aria-label="Activar i${i + 1}" class="w-[14px] h-[13px] grid place-items-center rounded-xs ${slot ? "bg-[#70a9ef] text-[#10233c]" : "bg-[#3f4e5b] text-[#1f2d3a]"}"><svg class="w-[11px] h-[11px]"><use href="#power"/></svg></button>
          ${slot ? `<button aria-label="Bypass" class="ml-px w-[13px] h-3 bg-[#a9b3bd] grid place-items-center"><svg class="w-[9px] h-2" fill="none" stroke="#1c2a38"><path d="M0 1.500h9M1.500 4.500h6v3h-6z"/></svg></button>
          <button aria-label="Editar" class="ml-px w-3 h-3 rounded-full bg-[#a9b3bd] text-[#1c2a38] italic font-bold text-[11px] leading-[10px]">e</button>` : ""}
          <span class="ml-auto w-[26px] h-[14px] pr-1 bg-[#50657a] [clip-path:polygon(0_0,100%_0,100%_100%,45%_100%)] text-right leading-[14px] font-bold ${i > 5 ? "text-[#e0a940]" : "text-[#d3dfec]"}">i ${i + 1}</span>
        </div>
        ${slot ? `<div class="h-[29px] w-[141px] px-[3px] pt-[3px] bg-black rounded-xs border border-[#0d151d]"><b class="block text-[11px] text-[#cfe0f0] leading-[12px]">${slot[0]}</b>
          <div class="flex justify-end items-center gap-[3px]"><span>${slot[1]}</span><svg class="w-[5px] h-[9px]" fill="#8a98a5"><path d="M0 3h5L2.500 0zM0 6h5L2.500 9z"/></svg><svg class="w-[9px] h-[11px] text-[#c3ccd6]" viewBox="0 0 10 12"><use href="#diamond"/></svg></div></div>`
          : `<div class="h-[29px] w-[141px] pl-1 pt-[5px] bg-[#1a2733] border-2 border-[#33475b] rounded-xs"><svg class="w-[6px] h-2"><path d="M0 0l6 4-6 4z" fill="#8b9aa8"/></svg></div>`}
      </div>`).join("");

    // audio tracks
    const btn = (label, sel) => `<button class="w-[22px] h-[14px] shrink-0 rounded-xs border text-black font-['DejaVu_Sans',sans-serif] font-bold text-[10px] leading-[10px] ${sel ? "bg-[#e4e8ec] border-[#8b929a]" : "bg-[#93a1af] border-[#2c3b4a]"}">${label}</button>`;
    const trackNames = ["Audio 01", "Copia de Audio 02", "Audio 02", "Copia de Audio 02", "Copia de Audio 02", "Copia de Audio 02", "Copia de Audio 02", "Copia de Audio 02", "Copia de Audio 02", "Copia de Audio 02"];
    document.getElementById("tracks").innerHTML = trackNames.map((name, i) => {
      const sel = i === 1;
      return `
      <div class="flex flex-1 min-h-0 pl-px border-b border-[#1d2c3a] bg-black">
        <div class="relative w-[26px] pr-[2px] pt-[3px] text-right text-[11px] bg-[#6280ad] text-[#0c1826]"><svg class="absolute left-px top-1 w-3 h-3"><path d="M0 0q3 4 11 6Q3 8 0 12z" fill="#d9e4f5"/></svg><span class="relative">${i + 1}</span></div>
        <div class="w-[145px] pl-[6px] pt-[3px] overflow-hidden ${sel ? "bg-[#d3d7dc] text-black" : "bg-[#4b5f73] text-[#d3dfec]"}">
          <div class="flex items-center">${btn("m", sel)}${btn("S", sel)}<b class="pl-[3px] text-[11px]">${name}</b></div>
          <div class="flex items-center mt-[2px]">
            <span class="w-[47px] -mt-[3px] ${sel ? "text-black" : "text-[#1d2c3b]"}">${i === 0 ? "estéreo" : "mono"}</span>
            <button aria-label="Grabar" class="w-[15px] h-[15px] rounded-full border border-[#2c3b4a] grid place-items-center ${sel ? "bg-[#e04848]" : "bg-[#c2cad3]"}"><i class="w-[6px] h-[6px] rounded-full bg-black"></i></button>
            <button aria-label="Monitor" class="ml-[3px] w-[13px] h-[13px] rounded-full border border-[#2c3b4a] grid place-items-center ${sel ? "bg-white" : "bg-[#b4bec8]"}"><svg class="w-[7px] h-2"><path d="M0 2.500h2.500L6 0v8L2.500 5.500H0z"/></svg></button>
            <span class="ml-[9px] flex">${btn("R", sel)}${btn("W", sel)}</span>
          </div>
        </div>
        <i class="ml-auto w-[2px] bg-[#26384a]"></i>
      </div>`;
    }).join("");

    // group and effect tracks
    const groups = [
      { n: 11, name: "Voces", color: "bg-[#5a9ba3]", icon: "M1.500 0v4.500h9V0M6.500 0v12M4 0v4M9 0v4" },
      { n: 13, name: "FX 2-H-.../Stereo", color: "bg-[#8b7590]", icon: "M10 1v6H2M5 4L2 7l3 3" },
    ];
    document.getElementById("groups").innerHTML = groups.map(g => `
      <div class="flex shrink-0 h-[40px] pr-[11px] border-b border-[#1d2c3a] bg-black">
        <div class="flex flex-1 min-w-0 ml-px bg-[#4b5f73]">
          <div class="w-[10px] bg-[#34475a]"></div>
          <div class="relative w-[26px] pt-[3px] pr-[2px] text-right text-[11px] text-[#0c1826] ${g.color}"><svg class="absolute left-[2px] top-1 w-3 h-3"><path d="${g.icon}" fill="none" stroke="#e1edf2" stroke-width="2"/></svg><span class="relative">${g.n}</span></div>
          <div class="flex-1 min-w-0 pl-[6px] pt-[2px] overflow-hidden">
            <div class="flex items-center">${btn("m", false)}${btn("S", false)}<b class="pl-[3px] text-[11px]">${g.name}</b></div>
            <div class="flex items-center mt-px">${btn("R", false)}${btn("W", false)}<span class="ml-[3px] pl-[2px] flex-1 h-3 bg-[#9aa7b3] text-[11px] text-black">Volumen</span></div>
          </div>
        </div>
      </div>`).join(`<div class="h-[59px] shrink-0"></div>`);

    document.getElementById("markers").innerHTML = Array.from({ length: 15 }, (_, i) => `<span>${i + 1}</span>`).join("");

    // time ruler, six ticks to the minute
    const MINUTE = 101.4;
    const LOOP_END = 398;
    let ruler = `<div class="absolute inset-y-0 left-0 bg-[#5a89ba]" style="width:${LOOP_END}px"></div><svg class="absolute inset-0 w-full h-full"><path d="M0 0h6L0 6zM398 0h-6l6 6z" fill="#fff"/>`;
    for (let i = 0; i <= 54; i++) {
      const x = Math.round(i * MINUTE / 6) + 0.5;
      ruler += `<path d="M${x} 0v${i % 6 === 0 ? 6 : i % 3 === 0 ? 5 : 3}" stroke="#e2ebf4"/>`;
    }
    ruler += "</svg>";
    for (let m = 0; m <= 9; m++) {
      ruler += `<span class="absolute bottom-0 leading-[10px]" style="left:${Math.round(m * MINUTE)}px">${m === 0 ? "0" : m + ":00"}</span>`;
    }
    document.getElementById("ruler").innerHTML = ruler;

    // repeatable noise for the waveforms
    let seed = 7;
    const rnd = () => (seed = (seed * 16807) % 2147483647) / 2147483647;

    const shapes = {
      flat: () => 0.3 + rnd() * 0.8,
      decay: t => (1 - t * 0.9) * (0.3 + rnd() * 0.9),
      bump: t => Math.sin(Math.PI * Math.min(1, t + 0.08)) * (0.3 + rnd() * 0.9),
      beads: t => Math.abs(Math.sin(4 * Math.PI * t)) * (1 - t * 0.5),
    };

    function wave(x0, x1, mid, amp, shape) {
      let top = "", bottom = "";
      for (let x = x0; x <= x1; x++) {
        const t = (x - x0) / Math.max(1, x1 - x0);
        const up = Math.max(0.3, amp * shapes[shape](t));
        const low = shape === "beads" ? up : Math.max(0.3, (up + amp * shapes[shape](t)) / 2);
        top += `L${x} ${(mid - up).toFixed(1)}`;
        bottom = `L${x} ${(mid + low).toFixed(1)}` + bottom;
      }
      return `<path d="M${x0} ${mid}${top}${bottom}z" fill="#fff" stroke="#000" stroke-width=".8"/>`;
    }

    // row, left, right, split points, wave height, label, fade line
    const clips = [
      [2, 420, 476, [427, 434, 440, 446, 452, 459, 462], [6, 3, 3, 4, 5, 5, 6, 5], ""],
      [2, 530, 559, [535, 537, 542, 547], [7, 3, 3, 3, 5], ""],
      [2, 586, 617, [596, 600, 604], [5, 11, 8, 11], ""],
      [2, 641, 668, [648, 652, 656], [3, 5, 4, 13], ""],
      [2, 682, 693, [687], [7, 9], ""],
      [2, 696, 725, [708, 713], [12, 6, 12], ""],
      [3, 476, 529, [483, 488, 490, 501, 515], [4, 6, 6, 13, 11, 11], "A"],
      [3, 530, 536, [], [2], ""],
      [3, 557, 587, [569], [12, 9], "A"],
      [3, 613, 642, [617, 619], [2, 5, 12], "Co"],
      [3, 669, 682, [677], [6, 9], ""],
      [3, 693, 697, [], [8], ""],
      [3, 723, 760, [729, 732, 735], [6, 6, 7, 12], "Cop"],
    ];
    const columns = [[449, 462, 1, "C"], [486, 494, 1, ""], [512, 522, 1, "C"], [530, 536, 2, ""], [557, 563, 2, ""], [588, 617, 2, "Cop"], [651, 660, 1, ""], [678, 686, 2, ""], [696, 702, 2, ""], [723, 729, 2, ""], [735, 747, 0, "C"]];
    for (let row = 4; row < 10; row++) {
      for (const [l, r, a, label] of columns) {
        const wide = (row === 8 && l < 520) || (row === 4 && l === 512) ? 2 : 0;
        const quiet = row > 7 && l !== 651 && l !== 678;
        const loud = (row === 6 || row === 7) && r - l < 9 && l > 500;
        const amp = quiet ? Math.min(a, 1) : loud ? 4 : a;
        clips.push([row, l - wide, r, l === 588 ? [613] : [], l === 588 ? [amp, 1] : [amp], label, (l === 449 && row > 4) || (l === 588 && row < 8)]);
      }
    }

    // grid: rows follow the track heights
    const ROW = 39.4;
    let svg = `<div class="absolute inset-y-0 left-0 bg-[#deebf3]" style="width:${LOOP_END}px"></div><svg class="absolute inset-0 w-full h-full">`;
    for (let i = 0; i <= 54; i++) {
      svg += `<path d="M${Math.round(i * MINUTE / 6) + 0.5} 0v560" stroke="${i % 6 === 0 ? "#b3bbc2" : i % 3 === 0 ? "#c9d1d8" : "#d5dde3"}"/>`;
    }
    for (const y of [39, 78, 118, 157, 197, 236, 275, 315, 354, 393, 412, 451, 470, 509]) {
      svg += `<path d="M0 ${y - 0.5}h1000" stroke="#bfc7cc"/>`;
    }
    for (const y of [422, 480, 519]) svg += `<path d="M0 ${y + 0.5}h1000" stroke="#62666c" stroke-width="1.500"/>`;
    svg += "</svg>";

    for (const [row, l, r, splits, amps, label, fade] of clips) {
      const w = r - l;
      const edges = [0, ...splits.map(s => s - l), w];
      let art = "";
      splits.forEach(s => art += `<path d="M${s - l - 0.5} 0v38" stroke="#000"/>`);
      if (fade) art += `<path d="M1.500 2v20" stroke="#1616ee"/><path d="M1 16.500h${w - 2}" stroke="#8ba4e0"/>`;
      amps.forEach((a, i) => {
        const shape = a > 7 && i % 2 === 1 ? "decay" : a > 0 && a < 3 && w > 8 ? "beads" : "bump";
        art += wave(edges[i], edges[i + 1] - 1, 11.5, a, shape);
      });
      svg += `<div class="absolute h-[39px] overflow-hidden bg-[#95a3b1] border border-black" style="left:${l - 337}px;top:${Math.round(row * ROW)}px;width:${w}px">
        <svg class="absolute inset-0 w-full h-full"><path d="M0 11.500h${w}M0 24.500h${w}" stroke="#000"/>${art}</svg>
        <span class="absolute bottom-0 left-[60%] leading-3 ${row === 3 ? "italic" : ""} ${label === "Cop" && row > 3 ? "-ml-[9px]" : ""}">${label}</span></div>`;
    }

    // stereo backing track
    let stereo = "";
    for (const [a, b] of [[1, 220], [226, 385]]) stereo += wave(a, b, 6, 6, "flat") + wave(a, b, 17, 6, "flat");
    let teeth = "";
    for (let x = 1; x < 385; x++) if (x < 219 || x > 226) teeth += `M${x + 0.5} 0v${(rnd() * 4).toFixed(1)}M${x + 0.5} ${(11 - rnd() * 3).toFixed(1)}V${(11 + rnd() * 3).toFixed(1)}M${x + 0.5} 24V${(20 + rnd() * 4).toFixed(1)}`;
    svg += `<div class="absolute top-0 left-[25px] w-[395px] h-[38px] bg-[#95a3b1] border border-black">
      <svg class="absolute inset-0 w-full h-full"><path d="M0 6.500h393M0 17.500h393M0 24.500h393M221.500 0v24M225.500 0v24M385.500 0v24" stroke="#000"/>${stereo}<path d="${teeth}" stroke="#222" stroke-width=".7"/></svg>
      <span class="absolute left-2 bottom-0 leading-[11px]">Blues ILAZRA</span>
      <svg class="absolute right-1 bottom-px w-[18px] h-[10px] bg-[#adb8c3]" fill="none" stroke="#5b6874"><path d="M4.500 1v7M2 7.500h2M7 5.500h10M9 3L7 5.500 9 8M15 3l2 2.500L15 8M11 3v5M13 3v5"/></svg></div>`;

    // selected event
    svg += `<div class="absolute top-[39px] left-0 w-[29px] h-[39px] bg-[#95a3b1] border border-[#d23a4a] border-l-[#27c8d0] overflow-hidden">
      <svg class="absolute inset-0 w-full h-full">${wave(0, 5, 12, 7, "decay")}${wave(5, 26, 12, 3, "flat")}<path d="M0 24.500h28" stroke="#000"/><path d="M0 0h6L0 6zM27 0h-6l6 6zM10 1h6v6h-6z" fill="#1010e8"/></svg>
      <span class="absolute inset-x-0 bottom-0 h-3 pl-[8px] bg-black text-white">Cop</span>
      <i class="absolute left-0 bottom-0 w-[6px] h-[6px] bg-white"></i><i class="absolute right-0 bottom-0 w-[6px] h-[6px] bg-white"></i></div>`;
    document.getElementById("canvas").innerHTML = svg;
  </script>
</body>
</html>
